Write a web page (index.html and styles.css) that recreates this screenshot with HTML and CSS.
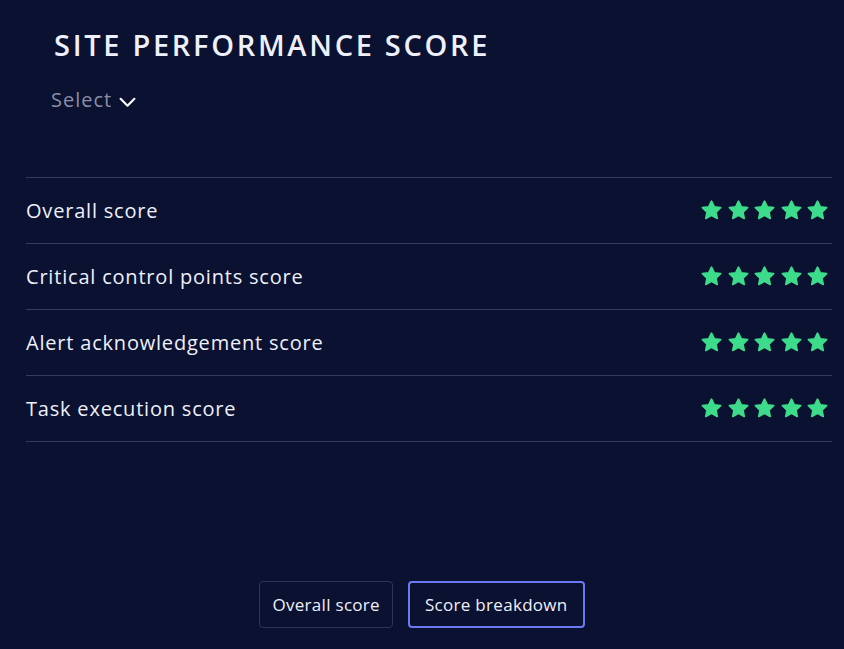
FILE: index.html
```html
<!DOCTYPE html>
<html lang="en">
<head>
<meta charset="utf-8">
<link rel="stylesheet" href="styles.css">
</head>
<body>
<div class="page">
  <header class="header">
    <h1 class="title">SITE PERFORMANCE SCORE</h1>
    <div class="select">Select
      <svg class="chev" viewBox="0 0 16 10" width="17" height="11"><path d="M1.5 1.5 L8 8 L14.5 1.5" fill="none" stroke="#ffffff" stroke-width="2" stroke-linecap="round" stroke-linejoin="round"/></svg>
    </div>
  </header>
  <div class="rows">
    <div class="row"><span class="label">Overall score</span><span class="stars"><svg viewBox="0 0 24 24"><use href="#s"/></svg><svg viewBox="0 0 24 24"><use href="#s"/></svg><svg viewBox="0 0 24 24"><use href="#s"/></svg><svg viewBox="0 0 24 24"><use href="#s"/></svg><svg viewBox="0 0 24 24"><use href="#s"/></svg></span></div>
    <div class="row"><span class="label">Critical control points score</span><span class="stars"><svg viewBox="0 0 24 24"><use href="#s"/></svg><svg viewBox="0 0 24 24"><use href="#s"/></svg><svg viewBox="0 0 24 24"><use href="#s"/></svg><svg viewBox="0 0 24 24"><use href="#s"/></svg><svg viewBox="0 0 24 24"><use href="#s"/></svg></span></div>
    <div class="row"><span class="label">Alert acknowledgement score</span><span class="stars"><svg viewBox="0 0 24 24"><use href="#s"/></svg><svg viewBox="0 0 24 24"><use href="#s"/></svg><svg viewBox="0 0 24 24"><use href="#s"/></svg><svg viewBox="0 0 24 24"><use href="#s"/></svg><svg viewBox="0 0 24 24"><use href="#s"/></svg></span></div>
    <div class="row"><span class="label">Task execution score</span><span class="stars"><svg viewBox="0 0 24 24"><use href="#s"/></svg><svg viewBox="0 0 24 24"><use href="#s"/></svg><svg viewBox="0 0 24 24"><use href="#s"/></svg><svg viewBox="0 0 24 24"><use href="#s"/></svg><svg viewBox="0 0 24 24"><use href="#s"/></svg></span></div>
  </div>
  <div class="buttons">
    <button class="btn">Overall score</button>
    <button class="btn active">Score breakdown</button>
  </div>
</div>
<svg width="0" height="0" class="defs">
  <defs>
    <path id="s" d="M12 1.4 L15.2 7.9 L22.4 8.8 L17.1 13.8 L18.5 21 L12 17.5 L5.5 21 L6.9 13.8 L1.6 8.8 L8.8 7.9 Z" fill="#3ddc8b" stroke="#3ddc8b" stroke-width="2" stroke-linejoin="round"/>
  </defs>
</svg>
</body>
</html>
```
FILE: styles.css
```css
* { box-sizing: border-box; }
html, body { margin: 0; padding: 0; }
body {
  background: #0b1130;
  width: 844px;
  height: 649px;
  overflow: hidden;
  font-family: "Open Sans", "DejaVu Sans", sans-serif;
  color: #eef0fb;
}
.page {
  display: flex;
  flex-direction: column;
  height: 649px;
}
.header {
  padding: 28px 0 0 54px;
}
.title {
  margin: 0;
  font-size: 29px;
  font-weight: 600;
  letter-spacing: 2.7px;
  line-height: 34px;
  color: #eef0fb;
}
.select {
  margin: 26px 0 0 -3px;
  display: flex;
  align-items: center;
  gap: 7px;
  font-size: 20px;
  letter-spacing: 1px;
  color: #8a8fa6;
  line-height: 24px;
}
.chev { margin-top: 4px; }
.rows {
  margin: 65px 12px 0 26px;
  border-top: 1px solid #343c5e;
}
.row {
  display: flex;
  align-items: center;
  justify-content: space-between;
  height: 66px;
  border-bottom: 1px solid #343c5e;
  padding-bottom: 1px;
}
.label {
  font-size: 20px;
  font-weight: 500;
  letter-spacing: 0.8px;
  color: #eef0fb;
}
.stars {
  display: flex;
  gap: 5.5px;
  margin-right: 4px;
}
.stars svg { width: 21px; height: 21px; display: block; }
.defs { position: absolute; }
.buttons {
  margin-top: auto;
  margin-bottom: 21px;
  display: flex;
  justify-content: center;
  gap: 15px;
}
.btn {
  font-family: "Open Sans", "DejaVu Sans", sans-serif;
  font-size: 17px;
  font-weight: 500;
  letter-spacing: 0.3px;
  color: #eef0fb;
  background: #0b1130;
  border: 1px solid #2c3558;
  border-radius: 4px;
  height: 47px;
  padding: 0 12px;
}
.btn.active {
  border: 2px solid #6d79f2;
  padding: 0 15px;
}
```
